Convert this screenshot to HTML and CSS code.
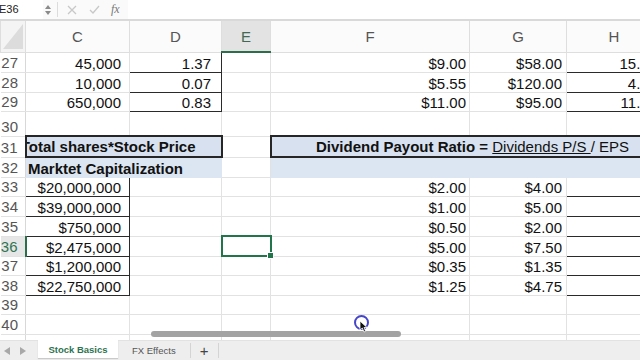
FILE: index.html
```html
<!DOCTYPE html>
<html>
<head>
<meta charset="utf-8">
<link rel="stylesheet" href="styles.css">
</head>
<body>
<div class="app">
  <div class="fbar">
    <div class="namebox">E36</div>
    <svg class="spin" width="6" height="12" viewBox="0 0 6 12"><path d="M0 5 L3 1 L6 5 Z M0 7 L3 11 L6 7 Z" fill="#8a8a8a"/></svg>
    <div class="fdiv"></div>
    <div class="ficons">
      <svg width="10" height="10" viewBox="0 0 10 10"><path d="M1 1 L9 9 M9 1 L1 9" stroke="#c8c8c8" stroke-width="1.3"/></svg>
      <svg width="11" height="10" viewBox="0 0 11 10"><path d="M1 5 L4 8 L10 1" stroke="#c8c8c8" stroke-width="1.3" fill="none"/></svg>
      <span class="fx">fx</span>
    </div>
    <div class="finput"></div>
  </div>
  <div class="sheet">
    <table class="grid">
      <colgroup>
        <col class="w-rh"><col class="w-c"><col class="w-d"><col class="w-e"><col class="w-f"><col class="w-g"><col class="w-h"><col class="w-i">
      </colgroup>
      <tr class="hdr">
        <td class="corner"><svg width="24" height="30" viewBox="0 0 24 30"><path d="M22 3 L22 28 L2 28 Z" fill="#dcdcdc"/></svg></td>
        <td>C</td><td>D</td><td class="hsel">E</td><td>F</td><td>G</td><td>H</td><td>I</td>
      </tr>
      <tr class="r20">
        <td class="rh">27</td><td class="num pc">45,000</td><td class="num pd bx bt0">1.37</td><td></td><td class="num pf">$9.00</td><td class="num pg">$58.00</td><td class="num ph bx bt0">15.47</td><td></td>
      </tr>
      <tr class="r20">
        <td class="rh">28</td><td class="num pc">10,000</td><td class="num pd bx">0.07</td><td></td><td class="num pf">$5.55</td><td class="num pg">$120.00</td><td class="num ph bx">4.63</td><td></td>
      </tr>
      <tr class="r19">
        <td class="rh">29</td><td class="num pc">650,000</td><td class="num pd bx">0.83</td><td></td><td class="num pf">$11.00</td><td class="num pg">$95.00</td><td class="num ph bx">11.82</td><td></td>
      </tr>
      <tr class="r25">
        <td class="rh">30</td><td></td><td></td><td></td><td></td><td></td><td></td><td></td>
      </tr>
      <tr class="r21">
        <td class="rh">31</td>
        <td colspan="2" class="title"><div class="endwrap"><span>Total shares*Stock Price</span></div></td>
        <td></td>
        <td colspan="4" class="title ctr"><b>Dividend Payout Ratio = </b><u>Dividends P/S </u>/ EPS</td>
      </tr>
      <tr class="r20">
        <td class="rh">32</td>
        <td colspan="2" class="band"><b>Marktet Capitalization</b></td>
        <td></td>
        <td colspan="4" class="band"></td>
      </tr>
      <tr class="r19">
        <td class="rh">33</td><td class="num pc bx">$20,000,000</td><td></td><td></td><td class="num pf">$2.00</td><td class="num pg">$4.00</td><td class="bx"></td><td></td>
      </tr>
      <tr class="r20">
        <td class="rh">34</td><td class="num pc bx">$39,000,000</td><td></td><td></td><td class="num pf">$1.00</td><td class="num pg">$5.00</td><td class="bx"></td><td></td>
      </tr>
      <tr class="r20">
        <td class="rh">35</td><td class="num pc bx">$750,000</td><td></td><td></td><td class="num pf">$0.50</td><td class="num pg">$2.00</td><td class="bx"></td><td></td>
      </tr>
      <tr class="r20">
        <td class="rh rsel">36</td><td class="num pc bx">$2,475,000</td><td></td><td class="sel"></td><td class="num pf">$5.00</td><td class="num pg">$7.50</td><td class="bx"></td><td></td>
      </tr>
      <tr class="r19">
        <td class="rh">37</td><td class="num pc bx">$1,200,000</td><td></td><td></td><td class="num pf">$0.35</td><td class="num pg">$1.35</td><td class="bx"></td><td></td>
      </tr>
      <tr class="r20">
        <td class="rh">38</td><td class="num pc bx">$22,750,000</td><td></td><td></td><td class="num pf">$1.25</td><td class="num pg">$4.75</td><td class="bx"></td><td></td>
      </tr>
      <tr class="r19">
        <td class="rh">39</td><td></td><td></td><td></td><td></td><td></td><td></td><td></td>
      </tr>
      <tr class="r20">
        <td class="rh">40</td><td></td><td></td><td></td><td></td><td></td><td></td><td></td>
      </tr>
      <tr class="r20">
        <td class="rh">41</td><td></td><td></td><td></td><td></td><td></td><td></td><td></td>
      </tr>
    </table>
  </div>
  <div class="tabs">
    <div class="tnav">
      <svg width="6" height="8" viewBox="0 0 6 8"><path d="M6 0 L0 4 L6 8 Z" fill="#a8a8a8"/></svg>
      <svg width="6" height="8" viewBox="0 0 6 8"><path d="M0 0 L6 4 L0 8 Z" fill="#a8a8a8"/></svg>
    </div>
    <div class="tab active">Stock Basics</div>
    <div class="tab">FX Effects</div>
    <div class="tab add">+</div>
  </div>
  <div class="hscroll"></div>
  <div class="cursor">
    <div class="ring"></div>
    <svg class="arrow" width="9" height="13" viewBox="0 0 9 13"><path d="M1 1 L1 10 L3.3 8 L5 12 L6.6 11.3 L5 7.5 L8 7.5 Z" fill="#111" stroke="#fff" stroke-width="0.8"/></svg>
  </div>
</div>
</body>
</html>
```
FILE: styles.css
```css
* { box-sizing: border-box; }
html, body { margin: 0; padding: 0; background: #fff; }
.app {
  position: relative;
  width: 640px;
  height: 360px;
  overflow: hidden;
  display: flex;
  flex-direction: column;
  font-family: "Liberation Sans", Arial, sans-serif;
}
.fbar {
  height: 21px;
  flex: none;
  display: flex;
  align-items: center;
  background: #fafafa;
  border-bottom: 2px solid #d9d9d9;
}
.namebox {
  width: 44px;
  height: 19px;
  line-height: 19px;
  font-size: 11px;
  color: #222;
  margin-left: -1px;
  background: #fff;
}
.spin { margin-left: 2px; }
.fdiv { width: 1px; height: 15px; background: #dcdcdc; margin-left: 6px; }
.ficons {
  display: flex;
  align-items: center;
  gap: 0;
  width: 70px;
  padding-left: 9px;
}
.ficons svg:first-child { margin-right: 12px; }
.ficons svg:nth-child(2) { margin-right: 11px; }
.fx {
  font-family: "Liberation Serif", serif;
  font-style: italic;
  font-size: 12px;
  color: #777;
}
.finput { flex: 1; height: 19px; background: #fff; }

.sheet { height: 319px; flex: none; overflow: hidden; }
.grid {
  border-collapse: collapse;
  table-layout: fixed;
  width: 721px;
  font-size: 15px;
  color: #111;
}
.w-rh { width: 25px; }
.w-c { width: 104px; }
.w-d { width: 92px; }
.w-e { width: 49px; }
.w-f { width: 199px; }
.w-g { width: 97px; }
.w-h { width: 95px; }
.w-i { width: 60px; }
.grid td {
  border: 1px solid #e2e2e2;
  padding: 0 3px;
  white-space: nowrap;
  overflow: hidden;
  vertical-align: bottom;
  line-height: 17px;
}
.hdr { height: 31px; }
.hdr td {
  text-align: center;
  vertical-align: middle;
  color: #555;
  font-size: 15px;
  background: #fbfbfb;
  border-top: none;
  border-color: #dedede;
}
.hdr td.corner { padding: 0; background: #f4f4f4; vertical-align: top; }
.hdr td.corner svg { display: block; }
.hdr td.hsel { background: #e3e3e3; color: #3f6b55; border-bottom: 2px solid #2c6e4c; }
.r19 { height: 19px; }
.r20 { height: 20px; }
.r21 { height: 21px; }
.r25 { height: 25px; }
.grid td.rh {
  text-align: right;
  padding: 0 7px 1px 0;
  color: #555;
  border-left: none;
  background: #fff;
  border-right-color: #d8d8d8;
}
.grid td.rsel { color: #2f7552; background: #e6e6e6; border-right: 2px solid #2c6e4c; }
.num { text-align: right; }
.grid td.pc { padding-right: 8px; }
.grid td.pd { padding-right: 10px; }
.grid td.pf { padding-right: 3px; }
.grid td.pg { padding-right: 4px; }
.grid td.ph { padding-right: 4px; }
.grid td.bx { border: 1px solid #2a2a2a; }
.grid td.bt0 { border-top-color: #dedede; }
.grid td.title {
  border: 2px solid #262626;
  background: #d8e1ef;
  font-weight: bold;
  padding: 0;
  vertical-align: middle;
}
.grid td.ctr { text-align: center; font-weight: normal; padding-right: 47px; }
.grid td.ctr b { font-weight: bold; }
.endwrap {
  display: flex;
  justify-content: flex-end;
  padding-right: 25px;
  overflow: hidden;
}
.grid td.band {
  background: #dce5f2;
  padding-left: 2px;
  border-color: #dce5f2;
}
.grid td.sel { border: 2px solid #22744a; position: relative; overflow: visible; }
.grid td.sel::after {
  content: "";
  position: absolute;
  right: -4px;
  bottom: -4px;
  width: 5px;
  height: 5px;
  background: #22744a;
  border: 1px solid #fff;
}
.tabs {
  height: 20px;
  flex: none;
  display: flex;
  align-items: stretch;
  background: #eeeeee;
  border-top: 1px solid #e2e2e2;
  font-size: 9.5px;
}
.tnav {
  width: 38px;
  display: flex;
  align-items: center;
  gap: 10px;
  padding-left: 4px;
}
.tab {
  display: flex;
  align-items: center;
  justify-content: center;
  color: #555;
  padding: 0 14px;
  border-right: 1px solid #d4d4d4;
  margin: 2px 0;
}
.tab.active {
  background: #fff;
  color: #2e7350;
  font-weight: bold;
  width: 80px;
  padding: 0;
  margin: -1px 0 2px;
  border-right: none;
  box-shadow: 0 1px 1px rgba(0,0,0,0.15);
}
.tab.add { font-size: 15px; color: #444; padding: 0 8px; width: 28px; }
.hscroll {
  position: absolute;
  left: 151px;
  top: 331px;
  width: 250px;
  height: 6px;
  border-radius: 3px;
  background: #a3a3a3;
}
.cursor { position: absolute; left: 354px; top: 315px; width: 16px; height: 18px; }
.ring {
  position: absolute;
  left: 0;
  top: 0;
  width: 15px;
  height: 15px;
  border: 2px solid #4646cc;
  border-radius: 50%;
}
.arrow { position: absolute; left: 5px; top: 5px; }
```
